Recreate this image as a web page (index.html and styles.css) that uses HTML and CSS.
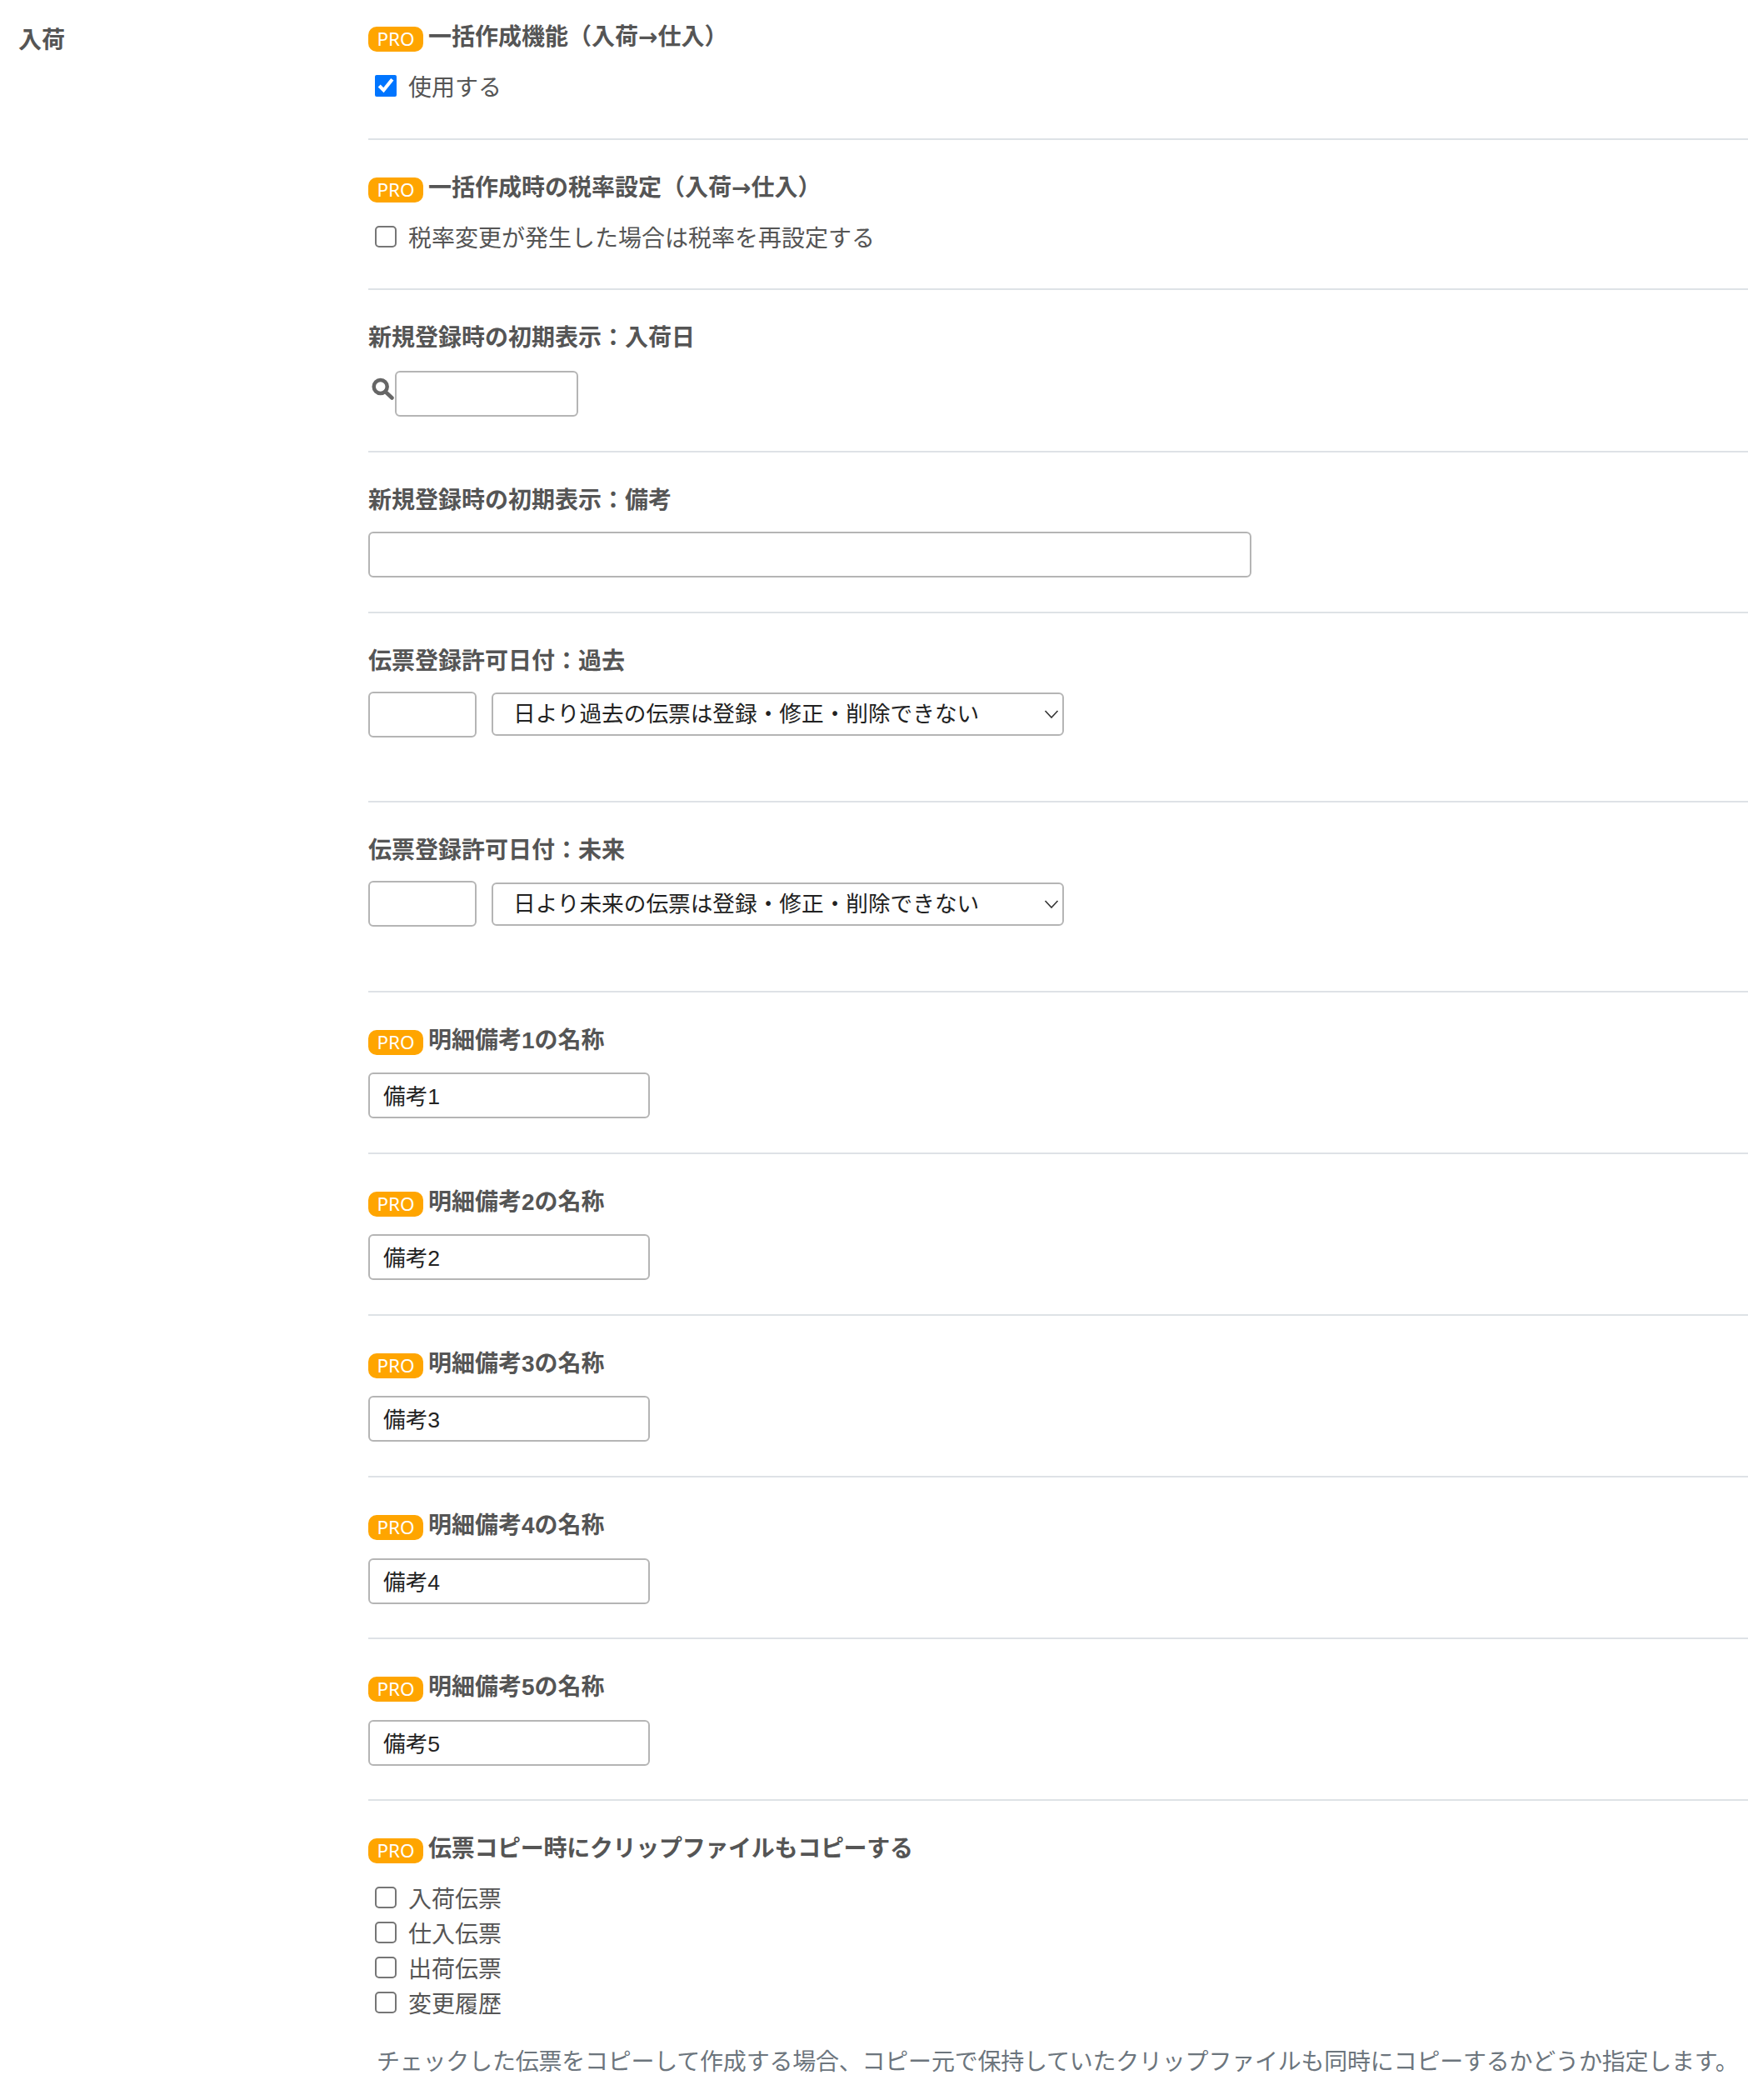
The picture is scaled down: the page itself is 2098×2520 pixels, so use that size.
FILE: index.html
```html
<!DOCTYPE html>
<html lang="ja">
<head>
<meta charset="utf-8">
<title>入荷</title>
<link rel="stylesheet" href="styles.css">
</head>
<body>
<main class="section">
  <div class="section-label">入荷</div>
  <div class="section-body">
    <div class="row row-first">
      <div class="title"><span class="pro">PRO</span>一括作成機能（入荷<span class="arrow">→</span>仕入）</div>
      <label class="check"><input type="checkbox" checked><span>使用する</span></label>
    </div>
    <div class="row row-check">
      <div class="title"><span class="pro">PRO</span>一括作成時の税率設定（入荷<span class="arrow">→</span>仕入）</div>
      <label class="check"><input type="checkbox"><span>税率変更が発生した場合は税率を再設定する</span></label>
    </div>
    <div class="row row-date">
      <div class="title">新規登録時の初期表示：入荷日</div>
      <div class="date-field">
        <svg class="search" width="28" height="28" viewBox="0 0 28 28"><circle cx="11.700" cy="11" r="8" fill="none" stroke="#666" stroke-width="4.500"/><path d="M17.500 17l8 7.500" stroke="#666" stroke-width="4.500" stroke-linecap="round"/></svg>
        <input class="input input-date" type="text">
      </div>
    </div>
    <div class="row row-wide">
      <div class="title">新規登録時の初期表示：備考</div>
      <input class="input input-wide" type="text">
    </div>
    <div class="row row-limit">
      <div class="title">伝票登録許可日付：過去</div>
      <div class="limit">
        <input class="input input-days" type="text">
        <div class="select"><span>日より過去の伝票は登録・修正・削除できない</span><svg width="18" height="10" viewBox="0 0 18 10"><path d="M1.500 1L9 9l7.500-8" fill="none" stroke="#333" stroke-width="1.600"/></svg></div>
      </div>
    </div>
    <div class="row row-limit">
      <div class="title">伝票登録許可日付：未来</div>
      <div class="limit">
        <input class="input input-days" type="text">
        <div class="select"><span>日より未来の伝票は登録・修正・削除できない</span><svg width="18" height="10" viewBox="0 0 18 10"><path d="M1.500 1L9 9l7.500-8" fill="none" stroke="#333" stroke-width="1.600"/></svg></div>
      </div>
    </div>
    <div class="row row-name">
      <div class="title"><span class="pro">PRO</span>明細備考1の名称</div>
      <input class="input input-name" type="text" value="備考1">
    </div>
    <div class="row row-name">
      <div class="title"><span class="pro">PRO</span>明細備考2の名称</div>
      <input class="input input-name" type="text" value="備考2">
    </div>
    <div class="row row-name">
      <div class="title"><span class="pro">PRO</span>明細備考3の名称</div>
      <input class="input input-name" type="text" value="備考3">
    </div>
    <div class="row row-name">
      <div class="title"><span class="pro">PRO</span>明細備考4の名称</div>
      <input class="input input-name" type="text" value="備考4">
    </div>
    <div class="row row-name">
      <div class="title"><span class="pro">PRO</span>明細備考5の名称</div>
      <input class="input input-name" type="text" value="備考5">
    </div>
    <div class="row row-last">
      <div class="title title-tight"><span class="pro">PRO</span>伝票コピー時にクリップファイルもコピーする</div>
      <div class="check-list">
        <label class="check"><input type="checkbox"><span>入荷伝票</span></label>
        <label class="check"><input type="checkbox"><span>仕入伝票</span></label>
        <label class="check"><input type="checkbox"><span>出荷伝票</span></label>
        <label class="check"><input type="checkbox"><span>変更履歴</span></label>
      </div>
      <p class="help">チェックした伝票をコピーして作成する場合、コピー元で保持していたクリップファイルも同時にコピーするかどうか指定します。</p>
    </div>
  </div>
</main>
</body>
</html>
```
FILE: styles.css
```css
* { box-sizing: border-box; }
html, body { margin: 0; padding: 0; background: #fff; }
body {
  font-family: "Liberation Sans", "Noto Sans CJK JP", sans-serif;
  font-size: 28px;
  line-height: 42px;
  color: #555;
  overflow: hidden;
  height: 2520px;
}
.section { display: grid; grid-template-columns: 442px 1fr; }
.section-label { font-weight: 700; padding: 28px 0 0 22px; }
.section-body { min-width: 0; }
.row { border-bottom: 2px solid #dee2e6; padding-top: 37px; height: 194.200px; }
.row-first { padding-top: 24px; height: 167.500px; }
.row-check { height: 180.500px; }
.row-date { height: 195px; }
.row-wide { height: 192.500px; }
.row-limit { height: 227.500px; }
.row-last { border-bottom: 0; height: auto; }
.title { font-weight: 700; display: flex; align-items: center; height: 42px; margin-bottom: 19px; white-space: nowrap; }
.row-date .title { margin-bottom: 18px; }
.row-wide .title { margin-bottom: 16px; }
.row-limit .title { margin-bottom: 15px; }
.row-name .title { margin-bottom: 17.500px; }
.title-tight { letter-spacing: -0.3px; }
.arrow { font-family: "DejaVu Sans", sans-serif; }
.pro {
  display: inline-block; width: 66px; height: 30px; margin: 4px 6px 0 0;
  background: #ffa500; color: #fff; border-radius: 10px;
  font-family: "Noto Sans", sans-serif; font-size: 22.500px; font-weight: 400; line-height: 30px; text-align: center; letter-spacing: 0;
}
.check { display: flex; align-items: center; height: 42px; padding-left: 8px; }
.check input { width: 26px; height: 26px; margin: 0 14px 6px 0; accent-color: #0075ff; flex: none; }
.check input:not(:checked) { appearance: none; background: #fff; border: 2px solid #767676; border-radius: 5px; }
.input {
  display: block; height: 55px; border: 2px solid #b5b5b5; border-radius: 6px;
  background: #fff; font-family: inherit; font-size: 26.670px; color: #222; padding: 0 16px 2px; outline: 0;
}
.date-field { display: flex; align-items: flex-start; }
.search { margin: 8px 1px 0 3px; flex: none; }
.input-date { width: 220px; }
.input-wide { width: 1060px; }
.input-name { width: 338px; }
.input-days { width: 130px; }
.limit { display: flex; align-items: center; gap: 18px; }
.select {
  width: 687px; height: 52px; border: 2px solid #b5b5b5; border-radius: 6px;
  display: flex; align-items: center; justify-content: space-between;
  padding: 0 4px 0 24px; color: #222; font-size: 26.670px; line-height: 48px;
}
.help { margin: 27px 0 0 10px; color: #6c757d; white-space: nowrap; letter-spacing: -0.22px; }
```
